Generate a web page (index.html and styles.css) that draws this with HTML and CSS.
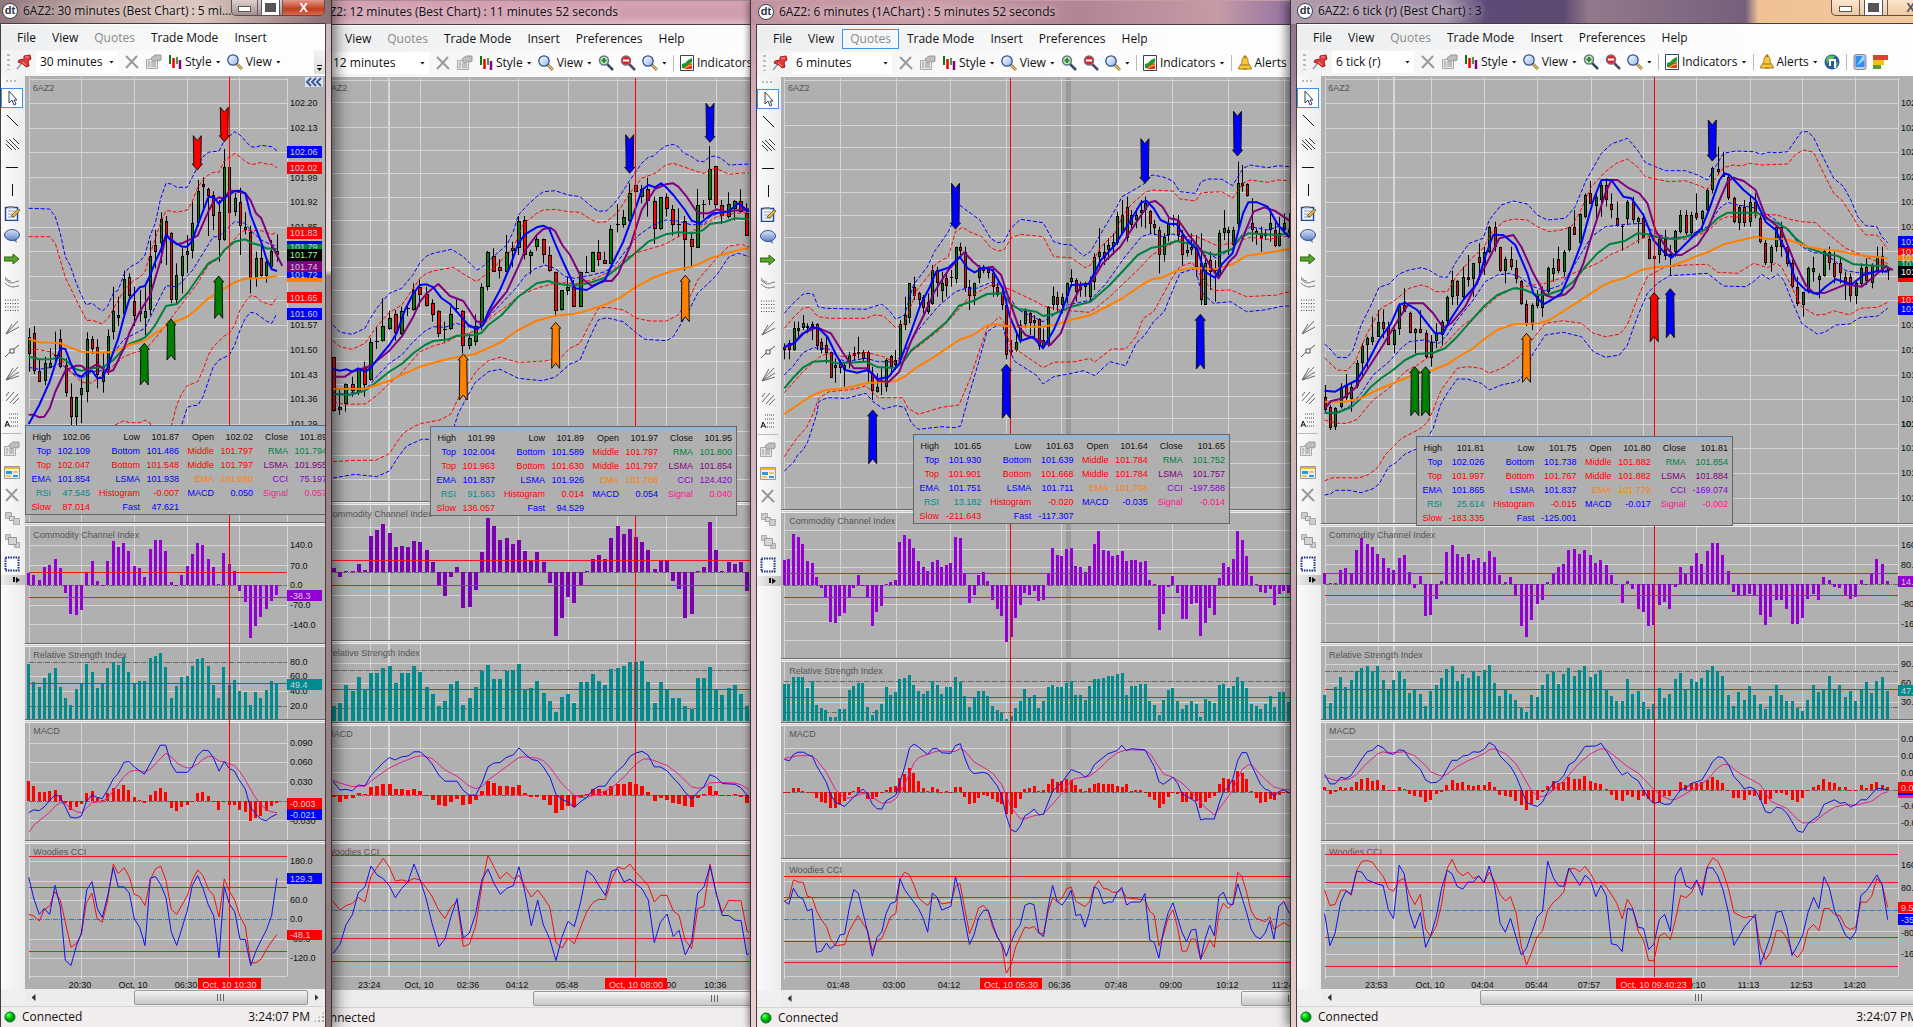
FILE: index.html
```html
<!DOCTYPE html>
<html lang="en">
<head>
<meta charset="utf-8">
<title>6AZ2 charts</title>
<link rel="stylesheet" href="styles.css">
</head>
<body>
<svg class="defs" aria-hidden="true">
  <defs>
    <linearGradient id="lens" x1="0" y1="0" x2="1" y2="1"><stop offset="0" stop-color="#fff"/><stop offset="1" stop-color="#8fb8ee"/></linearGradient>
    <linearGradient id="bub" x1="0" y1="0" x2="0" y2="1"><stop offset="0" stop-color="#dbe6f7"/><stop offset="1" stop-color="#5f83c6"/></linearGradient>
    <radialGradient id="lamp" cx=".35" cy=".3"><stop offset="0" stop-color="#9f9"/><stop offset=".5" stop-color="#0e0"/><stop offset="1" stop-color="#090"/></radialGradient>
  </defs>
  <symbol id="pin" viewBox="0 0 16 16"><path d="M1 15l5-6" stroke="#999" stroke-width="1.5"/><path d="M8 2l6-1 1 4-3 2 1 5-3 1-3-3-5-2 1-2 5-1z" fill="#dd3a3a" stroke="#a31c1c"/><path d="M9 3l4 0M6 8l4 3" stroke="#ff9a9a"/></symbol>
  <symbol id="cross" viewBox="0 0 16 16"><path d="M2 2l12 12M13 2L2 14" stroke="#9a9a9a" stroke-width="2" fill="none"/></symbol>
  <symbol id="props" viewBox="0 0 16 16"><path d="M.5 5.500h11v9H.5z" fill="#e4e4e4" stroke="#aaa"/><path d="M2 8h2M5 8h5M2 10h2M5 10h5M2 12h2M5 12h5" stroke="#999"/><path d="M5 4l4-3h6v5l-2 1-3-1-2 2-2-2z" fill="#bdbdbd" stroke="#999"/></symbol>
  <symbol id="style" viewBox="0 0 14 14"><path d="M2 0v9" stroke="#087a08" stroke-width="2"/><path d="M5.500 3v10" stroke="#e00" stroke-width="2.500"/><path d="M9 2v7" stroke="#087a08" stroke-width="1.500"/><path d="M12 5v9" stroke="#808" stroke-width="2.500"/></symbol>
  <symbol id="mag" viewBox="0 0 16 16"><path d="M9 9l6 6" stroke="#a8813c" stroke-width="3"/><path d="M9 9l6 6" stroke="#f2d28a"/><circle cx="6" cy="6" r="5.200" fill="url(#lens)" stroke="#33508f" stroke-width="1.300"/></symbol>
  <symbol id="zin" viewBox="0 0 16 16"><path d="M8 8l7 7" stroke="#344a66" stroke-width="2.500"/><circle cx="6" cy="5.500" r="4.500" fill="#bfe3bf" stroke="#678" stroke-width="1.500"/><path d="M6 3v5M3.500 5.500h5" stroke="#2a8a2a" stroke-width="2"/></symbol>
  <symbol id="zout" viewBox="0 0 16 16"><path d="M8 8l7 7" stroke="#4a4a66" stroke-width="2.500"/><circle cx="6" cy="5.500" r="4.500" fill="#d22" stroke="#867" stroke-width="1.500"/><path d="M3 5.500h6" stroke="#fff" stroke-width="2"/></symbol>
  <symbol id="ind" viewBox="0 0 14 16"><path d="M.5.5h13v15H.5z" fill="#fff" stroke="#345"/><path d="M2 13V9l3-1 3-3 4-2v4L5 13z" fill="#1a9a2a"/><path d="M3 14l4-4 5-2v6z" fill="#e33c1c"/><path d="M4 14l4-3 4-1" stroke="#fc3" fill="none"/></symbol>
  <symbol id="bell" viewBox="0 0 14 16"><path d="M7 2c-3 0-3 3-3 5 0 2-3.500 4-3.500 7h13c0-3-3.500-5-3.500-7 0-2 0-5-3-5z" fill="#f8c63c" stroke="#a87a12"/><circle cx="7" cy="1.800" r="1.500" fill="#a87a12"/><path d="M3 10h8M5 14h4" stroke="#b98a1c" stroke-width="1.500"/></symbol>
  <symbol id="globe" viewBox="0 0 16 16"><circle cx="8" cy="8" r="7.500" fill="#2f5a9a"/><path d="M2 5c2-4 6-4 9-3l-2 3-4 2-2 3zM11 9l3-1-1 4-3 2z" fill="#5cbf58"/><path d="M6 12V6h5v8" stroke="#fff" fill="none" stroke-width="2"/></symbol>
  <symbol id="phone" viewBox="0 0 13 16"><rect x=".5" y=".5" width="12" height="15" rx="2" fill="#ccd" stroke="#889"/><path d="M2 2h9v11H2z" fill="#2f8ef0"/><path d="M3 12l6-10 2 0v4z" fill="#9cd0ff"/></symbol>
  <symbol id="heat" viewBox="0 0 16 16"><path d="M0 1h15v5H0z" fill="#d9432c"/><path d="M0 6h11v5H0z" fill="#f2c21c"/><path d="M0 11h8v4H0z" fill="#5a9a33"/></symbol>
  <symbol id="ptr" viewBox="0 0 16 16"><path d="M5 1v12l3-3 2 5 2-1-2-4h3z" fill="#fff" stroke="#345"/></symbol>
  <symbol id="l1" viewBox="0 0 16 16"><path d="M3 2l11 11" stroke="#111"/></symbol>
  <symbol id="l3" viewBox="0 0 16 16"><path d="M2 4l10 10M5 3l10 10M9 2l6 6M2 8l6 6" stroke="#333"/></symbol>
  <symbol id="lh" viewBox="0 0 16 16"><path d="M2 8.500h12" stroke="#111"/></symbol>
  <symbol id="lv" viewBox="0 0 16 16"><path d="M8.500 2v12" stroke="#111"/></symbol>
  <symbol id="note" viewBox="0 0 16 16"><path d="M1.500 2.500h12v13h-12z" fill="#f4f8ff" stroke="#234b9c" stroke-width="1.500"/><path d="M4 1h6v2H4z" fill="#888"/><path d="M4 6h7M4 9h5M4 12h7" stroke="#99a"/><path d="M7 11l7-7 2 1-6 7z" fill="#f5b92e" stroke="#664"/></symbol>
  <symbol id="bubble" viewBox="0 0 16 16"><ellipse cx="8" cy="7" rx="7.500" ry="5.500" fill="url(#bub)" stroke="#334f96"/><path d="M9 12l4 3-1-4z" fill="#4a6cb5"/></symbol>
  <symbol id="arr" viewBox="0 0 16 16"><path d="M0 6h9V3l6 5-6 5v-3H0z" fill="#58a52c" stroke="#2b6310"/></symbol>
  <symbol id="curve" viewBox="0 0 16 16"><path d="M1 5c3 3 5 4 7 4s4-2 7-2M1 9c3 3 6 4 8 4s3-1 6-1M1 3c2 3 4 4 6 4" stroke="#777" fill="none"/></symbol>
  <symbol id="dots" viewBox="0 0 16 16"><path d="M1 3h14M1 6.500h14M1 10h14M1 13.500h14" stroke="#444" stroke-dasharray="1 1.500"/></symbol>
  <symbol id="fan" viewBox="0 0 16 16"><path d="M2 14L14 1M2 14L15 6M2 14l13-4M2 14L9 2" stroke="#666"/></symbol>
  <symbol id="fan2" viewBox="0 0 16 16"><path d="M2 14L14 1M2 14L15 7M2 14L8 4" stroke="#666"/></symbol>
  <symbol id="link" viewBox="0 0 16 16"><path d="M1 14l5-5M10 6l5-4M6 6h4v4H6z" stroke="#555" fill="none"/></symbol>
  <symbol id="hatch" viewBox="0 0 16 16"><path d="M2 12l8-9M6 14l8-9M9 15l6-6M2 7l3-4" stroke="#666"/></symbol>
  <symbol id="fib" viewBox="0 0 16 16"><path d="M1 15l2-6 3 6M2 13h3" stroke="#111" fill="none"/><path d="M5 2h10M5 6h10M7 10h8M7 14h8" stroke="#444" stroke-dasharray="1 1"/></symbol>
  <symbol id="cal" viewBox="0 0 16 16"><path d="M.5 2.500h15v12H.5z" fill="#e8f0fb" stroke="#999"/><path d="M1 3h14v2H1z" fill="#f0b828"/><path d="M2 7h6v3H2zM9 11h5v2H9z" fill="#2f9ad8"/><path d="M9 7h5v2H9zM2 11h5v2H2z" fill="#f3c64a"/></symbol>
  <symbol id="stack" viewBox="0 0 16 16"><path d="M1.500 2.500h6v6h-6z" fill="#ccc" stroke="#aaa"/><path d="M5.500 6.500h5v4h-5z" fill="#ddd" stroke="#999"/><path d="M9.500 8.500h6v6h-6z" fill="#ccc" stroke="#aaa"/></symbol>
  <symbol id="stack2" viewBox="0 0 16 16"><path d="M1.500 1.500h5v5h-5zM10.500 9.500h5v5h-5z" fill="#ccc" stroke="#aaa"/><path d="M4.500 4.500h8v7h-8z" fill="#d4d4d4" stroke="#999"/></symbol>
  <symbol id="sel" viewBox="0 0 16 16"><path d="M1.500 1.500h13v13h-13z" fill="#f8faff" stroke="#1c2f7a" stroke-width="2" stroke-dasharray="1.500 1"/></symbol>
</svg>

<!-- drawing palette, shared by every chart window -->
<template id="palette">
  <i class="tgrip"></i>
  <button class="on" aria-label="Pointer"><svg><use href="#ptr"/></svg></button>
  <button aria-label="Line"><svg><use href="#l1"/></svg></button>
  <button aria-label="Channel"><svg><use href="#l3"/></svg></button>
  <button aria-label="Horizontal line"><svg><use href="#lh"/></svg></button>
  <button aria-label="Vertical line"><svg><use href="#lv"/></svg></button>
  <button aria-label="Note"><svg><use href="#note"/></svg></button>
  <button aria-label="Balloon"><svg><use href="#bubble"/></svg></button>
  <button aria-label="Arrow"><svg><use href="#arr"/></svg></button>
  <button aria-label="Arc"><svg><use href="#curve"/></svg></button>
  <button aria-label="Levels"><svg><use href="#dots"/></svg></button>
  <button aria-label="Fan"><svg><use href="#fan2"/></svg></button>
  <button aria-label="Segment"><svg><use href="#link"/></svg></button>
  <button aria-label="Gann fan"><svg><use href="#fan"/></svg></button>
  <button aria-label="Pitchfork"><svg><use href="#hatch"/></svg></button>
  <button aria-label="Extension"><svg><use href="#fib"/></svg></button>
  <i class="tsep"></i>
  <button aria-label="Properties"><svg><use href="#props"/></svg></button>
  <button aria-label="Template"><svg><use href="#cal"/></svg></button>
  <button aria-label="Delete"><svg><use href="#cross"/></svg></button>
  <button aria-label="Forward"><svg><use href="#stack"/></svg></button>
  <button aria-label="Backward"><svg><use href="#stack2"/></svg></button>
  <button aria-label="Select"><svg><use href="#sel"/></svg></button>
  <i class="more"></i>
</template>

<main class="desktop">

  <!-- 12 minutes -->
  <section class="win win-b" data-chart="b">
    <header class="title"><span class="logo">dt</span><h2>6AZ2: 12 minutes (Best Chart) : 11 minutes 52 seconds</h2></header>
    <div class="client">
      <nav class="menu"><button>File</button><button>View</button><button disabled>Quotes</button><button>Trade Mode</button><button>Insert</button><button>Preferences</button><button>Help</button></nav>
      <div class="bar">
        <i class="grip"></i><svg class="i"><use href="#pin"/></svg>
        <button class="combo wide"><span>12 minutes</span><i class="dn"></i></button>
        <svg class="i"><use href="#cross"/></svg><svg class="i"><use href="#props"/></svg>
        <button class="tb"><svg class="n"><use href="#style"/></svg>Style<i class="dn"></i></button>
        <button class="tb"><svg class="i"><use href="#mag"/></svg>View<i class="dn"></i></button>
        <svg class="i"><use href="#zin"/></svg><svg class="i"><use href="#zout"/></svg>
        <button class="tb"><svg class="i"><use href="#mag"/></svg><i class="dn"></i></button><i class="sep"></i>
        <button class="tb"><svg class="n"><use href="#ind"/></svg>Indicators<i class="dn"></i></button>
      </div>
      <div class="work"><aside class="tools"></aside>
        <div class="chart"><svg class="plot"></svg>
          <table class="info info-b">
            <tr><th>High</th><td>101.99</td><th>Low</th><td>101.89</td><th>Open</th><td>101.97</td><th>Close</th><td>101.95</td></tr>
            <tr class="blue"><th>Top</th><td>102.004</td><th>Bottom</th><td>101.589</td><th class="red">Middle</th><td class="red">101.797</td><th class="green">RMA</th><td class="green">101.800</td></tr>
            <tr class="red"><th>Top</th><td>101.963</td><th>Bottom</th><td>101.630</td><th>Middle</th><td>101.797</td><th class="purple">LSMA</th><td class="purple">101.854</td></tr>
            <tr class="blue"><th>EMA</th><td>101.837</td><th>LSMA</th><td>101.926</td><th class="orange">EMA</th><td class="orange">101.708</td><th class="violet">CCI</th><td class="violet">124.420</td></tr>
            <tr class="red"><th class="teal">RSI</th><td class="teal">91.563</td><th>Histogram</th><td>0.014</td><th class="blue">MACD</th><td class="blue">0.054</td><th class="pink">Signal</th><td class="pink">0.040</td></tr>
            <tr class="red"><th>Slow</th><td>136.057</td><th class="blue">Fast</th><td class="blue">94.529</td><td colspan="4"></td></tr>
          </table>
        </div>
      </div>
      <div class="scroll"><button class="lt" aria-label="Scroll left"></button><div class="track track-b"><i class="thumb"></i></div></div>
      <footer class="status"><svg class="lamp"><circle cx="6" cy="6" r="5" fill="url(#lamp)" stroke="#064"/></svg><span>Connected</span></footer>
    </div>
  </section>

  <!-- 6 minutes -->
  <section class="win win-c" data-chart="c">
    <header class="title"><span class="logo">dt</span><h2>6AZ2: 6 minutes (1AChart) : 5 minutes 52 seconds</h2></header>
    <div class="client">
      <nav class="menu"><button>File</button><button>View</button><button class="hot" disabled>Quotes</button><button>Trade Mode</button><button>Insert</button><button>Preferences</button><button>Help</button></nav>
      <div class="bar">
        <i class="grip"></i><svg class="i"><use href="#pin"/></svg>
        <button class="combo wide"><span>6 minutes</span><i class="dn"></i></button>
        <svg class="i"><use href="#cross"/></svg><svg class="i"><use href="#props"/></svg>
        <button class="tb"><svg class="n"><use href="#style"/></svg>Style<i class="dn"></i></button>
        <button class="tb"><svg class="i"><use href="#mag"/></svg>View<i class="dn"></i></button>
        <svg class="i"><use href="#zin"/></svg><svg class="i"><use href="#zout"/></svg>
        <button class="tb"><svg class="i"><use href="#mag"/></svg><i class="dn"></i></button><i class="sep"></i>
        <button class="tb"><svg class="n"><use href="#ind"/></svg>Indicators<i class="dn"></i></button><i class="sep"></i>
        <button class="tb"><svg class="n"><use href="#bell"/></svg>Alerts<i class="dn"></i></button>
      </div>
      <div class="work">
        <aside class="tools"></aside>
        <div class="chart"><svg class="plot"></svg>
          <table class="info info-c">
            <tr><th>High</th><td>101.65</td><th>Low</th><td>101.63</td><th>Open</th><td>101.64</td><th>Close</th><td>101.65</td></tr>
            <tr class="blue"><th>Top</th><td>101.930</td><th>Bottom</th><td>101.639</td><th class="red">Middle</th><td class="red">101.784</td><th class="green">RMA</th><td class="green">101.752</td></tr>
            <tr class="red"><th>Top</th><td>101.901</td><th>Bottom</th><td>101.668</td><th>Middle</th><td>101.784</td><th class="purple">LSMA</th><td class="purple">101.757</td></tr>
            <tr class="blue"><th>EMA</th><td>101.751</td><th>LSMA</th><td>101.711</td><th class="orange">EMA</th><td class="orange">101.704</td><th class="violet">CCI</th><td class="violet">-197.588</td></tr>
            <tr class="red"><th class="teal">RSI</th><td class="teal">13.182</td><th>Histogram</th><td>-0.020</td><th class="blue">MACD</th><td class="blue">-0.035</td><th class="pink">Signal</th><td class="pink">-0.014</td></tr>
            <tr class="red"><th>Slow</th><td>-211.643</td><th class="blue">Fast</th><td class="blue">-117.307</td><td colspan="4"></td></tr>
          </table>
        </div>
      </div>
      <div class="scroll"><button class="lt" aria-label="Scroll left"></button><div class="track track-c"><i class="thumb"></i></div></div>
      <footer class="status"><svg class="lamp"><circle cx="6" cy="6" r="5" fill="url(#lamp)" stroke="#064"/></svg><span>Connected</span></footer>
    </div>
  </section>

  <!-- 6 tick -->
  <section class="win win-d" data-chart="d">
    <header class="title"><span class="logo">dt</span><h2>6AZ2: 6 tick (r) (Best Chart) : 3</h2><div class="sys"><button class="min" aria-label="Minimize"></button><button class="max" aria-label="Maximize"></button><button class="cls" aria-label="Close">X</button></div></header>
    <div class="client">
      <nav class="menu"><button>File</button><button>View</button><button disabled>Quotes</button><button>Trade Mode</button><button>Insert</button><button>Preferences</button><button>Help</button></nav>
      <div class="bar">
        <i class="grip"></i><svg class="i"><use href="#pin"/></svg>
        <button class="combo"><span>6 tick (r)</span><i class="dn"></i></button>
        <svg class="i"><use href="#cross"/></svg><svg class="i"><use href="#props"/></svg>
        <button class="tb"><svg class="n"><use href="#style"/></svg>Style<i class="dn"></i></button>
        <button class="tb"><svg class="i"><use href="#mag"/></svg>View<i class="dn"></i></button>
        <svg class="i"><use href="#zin"/></svg><svg class="i"><use href="#zout"/></svg>
        <button class="tb"><svg class="i"><use href="#mag"/></svg><i class="dn"></i></button><i class="sep"></i>
        <button class="tb"><svg class="n"><use href="#ind"/></svg>Indicators<i class="dn"></i></button><i class="sep"></i>
        <button class="tb"><svg class="n"><use href="#bell"/></svg>Alerts<i class="dn"></i></button>
        <svg class="i"><use href="#globe"/></svg><i class="sep"></i><svg class="n"><use href="#phone"/></svg><svg class="i"><use href="#heat"/></svg>
      </div>
      <div class="work">
        <aside class="tools"></aside>
        <div class="chart"><svg class="plot"></svg>
          <table class="info info-d">
            <tr><th>High</th><td>101.81</td><th>Low</th><td>101.75</td><th>Open</th><td>101.80</td><th>Close</th><td>101.81</td></tr>
            <tr class="blue"><th>Top</th><td>102.026</td><th>Bottom</th><td>101.738</td><th class="red">Middle</th><td class="red">101.882</td><th class="green">RMA</th><td class="green">101.854</td></tr>
            <tr class="red"><th>Top</th><td>101.997</td><th>Bottom</th><td>101.767</td><th>Middle</th><td>101.882</td><th class="purple">LSMA</th><td class="purple">101.884</td></tr>
            <tr class="blue"><th>EMA</th><td>101.865</td><th>LSMA</th><td>101.837</td><th class="orange">EMA</th><td class="orange">101.779</td><th class="violet">CCI</th><td class="violet">-169.074</td></tr>
            <tr class="red"><th class="teal">RSI</th><td class="teal">25.614</td><th>Histogram</th><td>-0.015</td><th class="blue">MACD</th><td class="blue">-0.017</td><th class="pink">Signal</th><td class="pink">-0.002</td></tr>
            <tr class="red"><th>Slow</th><td>-183.335</td><th class="blue">Fast</th><td class="blue">-125.001</td><td colspan="4"></td></tr>
          </table>
        </div>
      </div>
      <div class="scroll"><button class="lt" aria-label="Scroll left"></button><div class="track track-d"><i class="thumb"></i></div><button class="rt" aria-label="Scroll right"></button></div>
      <footer class="status"><svg class="lamp"><circle cx="6" cy="6" r="5" fill="url(#lamp)" stroke="#064"/></svg><span>Connected</span><time>3:24:07 PM</time></footer>
    </div>
  </section>

  <!-- 30 minutes -->
  <section class="win win-a" data-chart="a">
    <header class="title"><span class="logo">dt</span><h2>6AZ2: 30 minutes (Best Chart) : 5 mi...</h2><div class="sys"><button class="min" aria-label="Minimize"></button><button class="max" aria-label="Maximize"></button><button class="cls" aria-label="Close">X</button></div></header>
    <div class="client">
      <nav class="menu"><button>File</button><button>View</button><button disabled>Quotes</button><button>Trade Mode</button><button>Insert</button></nav>
      <div class="bar">
        <i class="grip"></i><svg class="i"><use href="#pin"/></svg>
        <button class="combo"><span>30 minutes</span><i class="dn"></i></button>
        <svg class="i"><use href="#cross"/></svg><svg class="i"><use href="#props"/></svg>
        <button class="tb"><svg class="n"><use href="#style"/></svg>Style<i class="dn"></i></button>
        <button class="tb"><svg class="i"><use href="#mag"/></svg>View<i class="dn"></i></button>
        <i class="over"></i>
      </div>
      <div class="work">
        <aside class="tools"></aside>
        <div class="chart"><svg class="plot"></svg>
          <button class="fold" aria-label="Collapse axis"><svg viewBox="0 0 18 10"><path d="M6 1L2 5l4 4M11 1L7 5l4 4M16 1l-4 4 4 4" fill="none" stroke="#3a5a9a" stroke-width="2"/></svg></button>
          <table class="info info-a">
            <tr><th>High</th><td>102.06</td><th>Low</th><td>101.87</td><th>Open</th><td>102.02</td><th>Close</th><td>101.89</td></tr>
            <tr class="blue"><th>Top</th><td>102.109</td><th>Bottom</th><td>101.486</td><th class="red">Middle</th><td class="red">101.797</td><th class="green">RMA</th><td class="green">101.794</td></tr>
            <tr class="red"><th>Top</th><td>102.047</td><th>Bottom</th><td>101.548</td><th>Middle</th><td>101.797</td><th class="purple">LSMA</th><td class="purple">101.955</td></tr>
            <tr class="blue"><th>EMA</th><td>101.854</td><th>LSMA</th><td>101.938</td><th class="orange">EMA</th><td class="orange">101.680</td><th class="violet">CCI</th><td class="violet">75.197</td></tr>
            <tr class="red"><th class="teal">RSI</th><td class="teal">47.545</td><th>Histogram</th><td>-0.007</td><th class="blue">MACD</th><td class="blue">0.050</td><th class="pink">Signal</th><td class="pink">0.057</td></tr>
            <tr class="red"><th>Slow</th><td>87.014</td><th class="blue">Fast</th><td class="blue">47.621</td><td colspan="4"></td></tr>
          </table>
        </div>
      </div>
      <div class="scroll"><button class="lt" aria-label="Scroll left"></button><div class="track track-a"><i class="thumb"></i></div><button class="rt" aria-label="Scroll right"></button></div>
      <footer class="status"><svg class="lamp"><circle cx="6" cy="6" r="5" fill="url(#lamp)" stroke="#064"/></svg><span>Connected</span><time>3:24:07 PM</time><i class="size"></i></footer>
    </div>
  </section>
</main>
<script src="charts.js"></script>
</body>
</html>
```

FILE: styles.css
```css
* { box-sizing: border-box; }
body { margin: 0; font: 12px/16px "Open Sans", "Noto Sans", sans-serif; color: #111; }
button { font: inherit; color: inherit; border: 0; background: none; padding: 0; margin: 0; }
.defs { position: absolute; width: 0; height: 0; }

.desktop { position: relative; height: 100vh; min-height: 600px; overflow: hidden; background: #a88c98; }
.win {
  position: absolute; top: 0; bottom: 0; display: flex; flex-direction: column; padding: 0 6px;
  border-left: 1px solid #3c3038; border-right: 1px solid #3c3038;
}
.win-a { left: -6px; width: 338px; background: linear-gradient(#cbb9b8 0, #e6d9d6 270px, #937f7f 276px, #9c8888 60%, #8b7878); box-shadow: 0 0 16px 2px #000a; }
.win-b { left: 287px; width: 636px; top: 1px; bottom: -1px; background: #d39fb0; }
.win-c { left: 750px; width: 600px; bottom: -1px; padding-top: 1px; background: linear-gradient(#c79aa6 0, #e0bfc4 200px, #c8a9b6 260px, #dcbfc8 60%, #e8d0d0); box-shadow: -2px 0 6px #0006; }
.win-d { left: 1290px; right: -28px; background: linear-gradient(#8b6f86 0, #a78a9a 120px, #ead5cf 200px, #c3a4ab 60%, #e6cfca); box-shadow: -3px 0 10px #0008; }

.title { flex: none; height: 24px; margin: 0 -6px; padding: 0 6px 2px; display: flex; align-items: center; }
.title h2 { margin: 0 0 0 5px; font-size: 12px; font-weight: 400; line-height: 16px; white-space: nowrap; color: #111; text-shadow: 0 0 6px #fff8, 0 0 8px #fff8; }
.win-a .title { background: linear-gradient(90deg, #8d7479, #c9b0ab 35%, #dcc7bf 60%, #8a6f72); }
.win-b .title { background: linear-gradient(#d59fb0, #cf9db0 60%, #dfb9c2); }
.win-c .title { background: linear-gradient(90deg, #c0939e, #cf9fab 30%, #b28594 55%, #c59ba6 78%, #8d6ca0 92%); }
.win-d .title { background: linear-gradient(90deg, #b09aac 0, #a592aa 24%, #5d4a78 30%, #5c4a72 42%, #927a8c 46%, #75607c 70%, #efc193 72%, #f1cba2); }
.logo { flex: none; width: 16px; height: 16px; border: 1px solid #345; border-radius: 8px; background: #fff; text-align: center; font: 700 11px/13px "Liberation Sans", sans-serif; color: #334; }
.win-a .logo, .win-c .logo { margin-left: 1px; }
.sys { margin-left: auto; align-self: flex-start; height: 16px; display: flex; border: 1px solid #5b4a50; border-top: 0; border-radius: 0 0 5px 5px; overflow: hidden; background: linear-gradient(#ddd0cc, #a58f90); }
.sys button { width: 28px; height: 15px; display: grid; place-items: center; border-right: 1px solid #6b5a60; }
.sys .cls { width: 45px; border: 0; background: linear-gradient(#e3998a, #c23c20 60%, #d8694a); color: #fff; font: 700 13px/14px "Liberation Sans", sans-serif; }
.win-d .sys, .win-d .sys .cls { background: linear-gradient(#fbe6cf, #efc9a0); color: #555; }
.min::before { content: ""; width: 11px; height: 4px; margin-top: 3px; background: #fff; border: 1px solid #555; }
.max::before { content: ""; width: 11px; height: 9px; border: 3px solid #fff; outline: 1px solid #555; background: #555; }

.client { flex: 1; min-height: 0; display: flex; flex-direction: column; background: #f0f0f0; border-top: 1px solid #fff; outline: 1px solid #4a3c42; }
.menu { flex: none; height: 25px; display: flex; align-items: center; padding-left: 8px; background: linear-gradient(90deg, #eceef0, #fdfdfd 70%); overflow: hidden; }
.menu button { height: 20px; padding: 0 7px; white-space: nowrap; border: 1px solid transparent; }
.menu button:disabled { color: #8a8a8a; }
.menu .hot { border-color: #3a97e8; background: #f4f6f8; }
.bar { flex: none; height: 26px; display: flex; align-items: center; gap: 6px; padding: 0 0 2px 6px; background: linear-gradient(90deg, #f3f3f3, #fdfdfd 60%); overflow: hidden; white-space: nowrap; }
.i { flex: none; width: 16px; height: 16px; }
.n { flex: none; width: 14px; height: 16px; }
.grip { width: 3px; height: 16px; background: repeating-linear-gradient(#bbb 0 2px, transparent 2px 5px); }
.combo { flex: none; width: 82px; height: 22px; margin-left: -2px; padding: 0 4px; background: #fff; display: flex; align-items: center; justify-content: space-between; }
.combo.wide { width: 100px; }
.tb { flex: none; display: flex; align-items: center; gap: 3px; }
.dn { width: 5px; height: 3px; margin-left: 1px; background: #111; clip-path: polygon(0 0, 100% 0, 50% 100%); }
.sep { flex: none; width: 1px; height: 16px; background: #bbb; }
.over { margin-left: auto; align-self: stretch; width: 11px; background: linear-gradient(#f3f3f3, #ddd); display: flex; flex-direction: column; gap: 2px; align-items: center; justify-content: flex-end; padding-bottom: 3px; }
.over::before { content: ""; width: 5px; height: 1px; background: #111; }
.over::after { content: ""; width: 5px; height: 3px; background: #111; clip-path: polygon(0 0, 100% 0, 50% 100%); }

.work { flex: 1; min-height: 0; display: flex; }
.tools { flex: none; width: 24px; padding-top: 3px; display: flex; flex-direction: column; align-items: flex-start; background: linear-gradient(90deg, #fbfbfb, #ececec); overflow: hidden; }
.tools button { flex: none; width: 22px; height: 23px; display: grid; place-items: center; }
.tools .on { height: 20px; margin: 1px 0; border: 1px solid #3a97e8; background: #fff; }
.tools svg { width: 16px; height: 16px; }
.tgrip { flex: none; width: 10px; height: 2px; margin: 1px 5px 5px; background: repeating-linear-gradient(90deg, #bbb 0 2px, transparent 2px 4px); }
.tsep { flex: none; width: 20px; height: 1px; margin: 2px 1px 3px; background: #bbb; }
.more { flex: none; width: 24px; height: 10px; padding: 2px 5px 0 0; display: flex; gap: 1px; justify-content: flex-end; background: linear-gradient(90deg, #eee, #bbb); }
.more::before { content: ""; width: 2px; height: 5px; background: #111; }
.more::after { content: ""; width: 4px; height: 6px; background: #111; clip-path: polygon(0 0, 100% 50%, 0 100%); }

.chart { flex: 1; min-width: 0; position: relative; overflow: hidden; background: #b0b0b0; }
.plot { display: block; width: 100%; height: 100%; font: 9px "Liberation Sans", sans-serif; }
.fold { position: absolute; right: 2px; top: 1px; width: 18px; height: 10px; background: #dde2ea; }
.fold svg { display: block; }
.info { position: absolute; width: 306px; height: 89px; table-layout: fixed; border-collapse: separate; border-spacing: 0; padding: 4px 4px 0 0; border: 1px solid #666; background: linear-gradient(#97b4d3 4px, #b0b0b0 4px); font: 9px/14px "Liberation Sans", sans-serif; color: #111; }
.info th, .info td { padding: 0; font-weight: 400; text-align: right; white-space: nowrap; height: 14px; }
.info th:nth-child(1) { width: 25px; }
.info td:nth-child(2) { width: 39px; }
.info th:nth-child(3) { width: 50px; }
.info td:nth-child(4), .info td:nth-child(6), .info td:nth-child(8) { width: 39px; }
.info th:nth-child(5), .info th:nth-child(7) { width: 35px; }
.info-a { left: 0; top: 349px; }
.info-b { left: 112px; top: 349px; }
.info-c, .info-d { width: 317px; }
.info-c td:nth-child(2), .info-c td:nth-child(4), .info-c td:nth-child(8), .info-d td:nth-child(2), .info-d td:nth-child(4), .info-d td:nth-child(8) { width: 42px; }
.info-c { left: 132px; top: 357px; }
.info-d { left: 95px; top: 360px; }
.info .blue, .info tr.blue { color: #00f; }
.info .red, .info tr.red { color: #f00; }
.info .green { color: #00803c; }
.info .purple { color: #800080; }
.info .orange { color: #ff8000; }
.info .violet { color: #8800cc; }
.info .teal { color: #008c8c; }
.info .pink { color: #ff1493; }

.scroll { flex: none; height: 17px; margin-left: 24px; display: flex; background: #ececec; }
.scroll button { flex: none; width: 17px; display: grid; place-items: center; }
.lt::before { content: ""; width: 4px; height: 7px; background: #333; clip-path: polygon(100% 0, 100% 100%, 0 50%); }
.rt::before { content: ""; width: 4px; height: 7px; background: #333; clip-path: polygon(0 0, 0 100%, 100% 50%); }
.track { flex: 1; display: flex; padding: 1px 0; }
.thumb { flex: 1; border: 1px solid #999; border-radius: 2px; background: repeating-linear-gradient(90deg, #666 0 1px, transparent 1px 3px) center/8px 7px no-repeat, linear-gradient(#f4f4f4, #dcdcdc 50%, #c8c8c8); }
.track-a { padding-left: 92px; }
.track-b { padding: 1px 20px 1px 198px; }
.track-c { padding-left: 443px; }
.track-d { padding-left: 142px; }
.status { flex: none; height: 21px; display: flex; align-items: center; padding: 0 0 0 3px; background: #f1edec; border-top: 1px solid #d8d4d4; }
.lamp { width: 12px; height: 12px; margin-right: 6px; }
.status time { margin-left: auto; padding-right: 16px; }
.status .size { width: 12px; height: 12px; margin-left: -13px; background: radial-gradient(#aaa 1px, transparent 1px) 0 0/4px 4px; clip-path: polygon(100% 0, 100% 100%, 0 100%); }
```

FILE: charts.js
```js
// Each chart keeps its samples in plot units; ox/sx map them to pixels across,
// and the price pane (top) and the study panes (low) have a scale of their own down.
const NS = 'http://www.w3.org/2000/svg';
const C = { b: '#0000ff', r: '#ff0000', g: '#008040', o: '#ff8000', p: '#800080', k: '#000', t: '#008c8c', v: '#9400d3', m: '#ff1493' };

const charts = {
a: {
  left: 25, topY: 76, ox: 0, sx: 3, x0: 86, step: 15.83, x1: 861, bw: 3, cross: 688, cci: '#9400d3',
  vx: [86, 244, 403, 562, 718], thick: [],
  hy: [238, 310, 383, 457, 532, 605, 680, 754, 827, 901, 976, 1049, 1124, 1198, 1272], hl: [],
  div: [265, 578, 775, 1087], base: [425, 772, 983],
  hc: [324, 375, 477, 528, 662, 700, 833, 882, 934, 1034, 1140, 1190, 1240, 1340, 1389], dash: [425, 625, 738, 983], zero: 1290,
  red: [393, 458, 680, 1125, 1207, 1372], titles: [297, 608, 804, 1115], tx: 100, hx: 98,
  up1: '86,625 149,627 166,650 181,700 196,770 211,797 229,850 244,885 259,915 276,908 292,923 307,933 322,920 340,880 355,870 372,822 388,802 419,785 435,765 451,705 466,670 482,595 498,550 514,552 530,562 562,562 577,532 609,470 625,457 657,453 673,422 704,395 720,405 752,440 768,442 784,436 815,440 831,453',
  up2: '86,710 149,710 166,730 196,832 229,900 260,962 276,960 307,972 324,955 340,927 372,870 403,840 419,832 435,815 451,760 482,668 498,632 514,633 530,637 562,630 577,605 593,562 609,540 625,525 640,517 657,517 673,483 704,460 720,470 736,485 752,493 768,492 784,487 799,492 815,493 831,503',
  mid1: '86,1102 118,1108 149,1103 181,1090 213,1117 244,1135 276,1115 307,1112 340,1060 372,1018 403,1002 435,985 466,920 498,857 530,860 546,845 577,812 609,760 640,710 657,710 673,693 704,665 736,670 752,692 784,720 815,735 831,738',
  mid2: '86,1049 118,1049 149,1055 181,1075 213,1117 244,1145 260,1150 276,1148 307,1125 340,1097 372,1070 403,1058 435,1050 466,1015 498,975 530,932 562,890 593,850 625,795 657,775 688,735 720,700 736,690 752,692 784,692 815,703 831,697',
  lo2: '345,1275 372,1262 388,1268 419,1268 435,1260 451,1270 455,1300 505,1300 514,1278 530,1215 546,1180 562,1157 593,1145 609,1110 625,1065 640,1040 673,1008 688,1000 704,975 720,930 736,905 752,887 768,890 784,905 815,915 831,890',
  lo1: '540,1290 562,1222 577,1217 593,1216 609,1190 640,1100 657,1080 688,1065 704,1035 720,990 736,955 752,937 768,940 799,963 815,970 831,940',
  green: '86,1070 118,1078 149,1078 181,1073 196,1080 213,1095 229,1108 244,1112 276,1105 307,1102 324,1092 340,1080 372,1045 388,1032 419,1020 435,1012 451,995 466,975 498,918 530,912 562,880 593,835 625,790 657,773 673,750 704,725 736,718 752,728 784,737 799,745 831,748',
  orange: '86,1016 118,1027 181,1030 213,1043 244,1055 307,1058 340,1055 372,1042 388,1035 435,1022 466,1000 498,978 530,963 562,950 593,925 625,895 657,878 673,865 704,847 736,836 799,833 831,827',
  purple: '86,1244 101,1244 118,1252 133,1250 149,1225 166,1175 196,1112 229,1097 244,1097 260,1110 292,1092 307,1105 324,1117 340,1110 355,1080 372,1045 388,1000 419,935 451,885 482,780 498,705 514,717 530,733 546,730 577,715 593,707 625,635 641,603 657,592 673,597 688,572 704,573 736,580 752,602 768,640 784,655 815,735 847,798',
  blue: '86,1272 118,1215 149,1145 181,1045 196,1047 213,1092 229,1123 244,1130 260,1115 276,1112 292,1135 307,1133 324,1100 355,1015 372,950 388,898 419,862 435,858 451,825 466,785 482,750 498,705 514,722 546,740 562,740 577,722 593,675 625,592 640,590 657,612 673,592 688,585 704,573 720,572 736,580 752,645 784,727 799,775 815,808 831,813',
  candles: '985,1115,1010,1060,g 978,1122,998,1112,r 1080,1145,1113,1145,r 1070,1155,1090,1145,g 1045,1105,1088,1102,g 995,1090,1064,1067,g 988,1105,1018,1102,r 1075,1190,1095,1178,r 1150,1290,1190,1250,r 1190,1290,1190,1250,g 1135,1270,1165,1185,g 997,1207,1018,1178,g 1008,1062,1018,1048,r 1018,1165,1040,1125,r 1060,1178,1115,1145,g 988,1125,1008,1110,g 860,1018,933,995,g 890,978,945,955,g 812,945,838,943,g 820,900,830,888,r 860,978,902,948,r 870,965,933,943,r 860,1005,933,953,g 722,945,767,930,g 690,805,735,755,r 637,790,658,730,g 648,795,662,705,r 697,910,700,902,r 790,915,826,902,g 745,880,767,826,g 705,820,753,764,g 605,775,670,755,g 540,680,574,670,g 532,630,553,563,r 563,708,566,587,r 574,690,584,646,r 600,785,636,721,r 447,722,502,720,g 498,640,500,637,r 578,648,595,637,g 563,765,607,680,r 637,703,680,690,r 677,880,695,836,r 755,860,775,838,g 723,830,773,826,r 775,848,785,828,g 720,808,753,802,g 703,785,753,764,r',
  c: '395,400,413,380,375,359,382,447,500,503,490,393,364,416,429,364,313,328,318,338,377,382,406,333,310,310,338,418,429,400,377,346,318,323,359,380,424,344,372,390,441,470,562,531,508,487,467,451',
  s: '630,677,690,666,654,641,690,718,736,695,682,630,651,692,682,641,625,633,612,651,682,674,674,615,610,602,638,718,687,664,661,635,617,615,635,685,718,638,685,672,700,703,736,703,718,697,674,682',
  h: '933,945,961,961,958,956,968,990,1007,1000,992,964,958,975,981,964,950,952,943,956,974,982,989,969,958,951,961,1001,1009,1000,995,983,964,961,972,987,1006,983,994,994,1007,1013,1035,1028,1024,1010,997,989',
  macd: '86,1014 101,1007 118,1009 133,999 149,983 166,967 181,974 196,999 211,1026 229,1028 244,1023 259,986 276,968 292,975 307,978 322,957 340,927 355,912 372,884 388,882 403,896 433,915 451,887 481,840 497,840 514,890 529,910 562,910 577,896 592,868 609,853 625,854 640,872 657,907 673,882 688,900 703,907 718,930 736,953 751,1000 766,1016 784,1032 799,1035 814,1025 831,1018',
  sig: '86,1065 103,1045 149,1013 166,997 181,988 196,991 211,1002 229,1012 244,1014 259,1003 276,988 307,986 325,975 340,958 370,923 388,909 403,905 418,906 435,909 451,902 481,875 497,861 514,870 529,884 544,893 562,899 577,897 592,889 609,877 625,869 640,870 657,881 673,883 688,888 703,893 718,906 736,930 766,975 784,994 799,1006 814,1012 831,1014',
  wr: '86,1277 101,1281 118,1294 133,1265 149,1255 164,1218 181,1240 196,1297 213,1362 229,1352 244,1330 259,1248 276,1222 291,1287 307,1297 322,1245 340,1147 355,1172 372,1156 388,1180 403,1225 419,1231 435,1254 451,1188 466,1160 482,1152 498,1190 514,1264 530,1277 562,1228 577,1189 593,1162 609,1177 625,1212 641,1228 657,1284 673,1185 688,1217 704,1240 720,1283 736,1307 752,1402 768,1402 784,1392 799,1368 815,1347 831,1329',
  wb: '86,1181 101,1235 118,1277 133,1262 149,1277 165,1202 181,1258 196,1395 213,1409 229,1359 244,1325 260,1214 276,1192 292,1262 307,1285 324,1225 340,1156 355,1206 372,1206 388,1222 403,1289 419,1310 435,1358 451,1184 466,1179 482,1200 498,1234 514,1323 530,1357 546,1312 562,1267 577,1202 593,1177 609,1210 625,1252 641,1281 657,1389 673,1205 688,1250 704,1270 720,1341 736,1342 752,1409 768,1371 784,1343 799,1318 815,1279 831,1183',
  arrows: 'd,592,407,510,#ff0000 d,673,322,425,#ff0000 u,433,1030,1155,#008000 u,513,957,1080,#008000 u,656,828,955,#008000',
  times: [[240, '20:30'], [399, 'Oct, 10'], [558, '06:30']], ty: 1458, now: [594, 783, 'Oct, 10 10:30'],
  axT: [[310, '102.20'], [385, '102.13'], [533, '101.99'], [607, '101.92'], [680, '101.85'], [976, '101.57'], [1050, '101.50'], [1124, '101.43'], [1198, '101.36'], [1272, '101.29']],
  axL: [[324, '140.0'], [376, '70.0'], [425, '0.0'], [477, '-70.0'], [529, '-140.0'], [624, '80.0'], [662, '60.0'], [700, '40.0'], [738, '20.0'], [833, '0.090'], [882, '0.060'], [934, '0.030'], [983, '0.000'], [1035, '-0.030'], [1140, '180.0'], [1190, '120.0'], [1241, '60.0'], [1290, '0.0'], [1340, '-60.0'], [1389, '-120.0']],
  badT: [[724, 738, '', C.b], [733, 748, '101.79', C.g], [833, 845, '', C.o], [815, 833, '101.72', C.b], [783, 817, '101.74', C.p], [748, 782, '101.77', C.k, '#9f9'], [438, 475, '102.06', C.b], [485, 522, '102.02', C.r], [680, 716, '101.83', C.r], [875, 910, '101.65', C.r], [924, 959, '101.60', C.b]],
  badL: [[440, 468, '-38.3', C.v], [669, 697, '49.4', C.t], [976, 1005, '-0.003', C.r], [1005, 1034, '-0.021', C.b], [1171, 1199, '129.3', C.b], [1316, 1343, '-48.1', C.r]]
},
b: {
  left: 318, topY: 77, ox: 325, sx: 3, x0: 27, step: 18.49, x1: 1800, bw: 4, cross: 931, cci: '#7a00b0',
  vx: [-14, 136, 286, 433, 580, 730, 877, 1024, 1174, 1320], thick: [[191, 2, '#d8d8d8']],
  hy: [240, 307, 380, 449, 520, 590, 660, 731, 802, 871, 942, 1013, 1084, 1153, 1222], hl: [29, 89, 151],
  div: [212, 570, 782, 1088], base: [393, 778, 968],
  hc: [277, 335, 453, 510, 627, 678, 729, 848, 908, 1027, 1150, 1210, 1325, 1380], dash: [393, 645, 745, 968], zero: 1266,
  red: [361, 427, 695, 1124, 1194, 1338, 1398], titles: [242, 601, 812, 1117], tx: 4, hx: 2,
  up1: '24,975 45,997 82,1003 120,985 136,955 155,925 193,880 230,865 265,823 285,788 305,768 325,760 380,748 415,770 455,810 470,803 490,783 545,735 565,695 580,645 610,613 635,590 655,575 690,572 730,585 765,590 800,620 820,634 845,632 860,618 880,595 915,540 950,490 970,472 985,468 1005,450 1022,438 1045,433 1060,440 1075,458 1100,470 1118,483 1137,485 1155,470 1173,468 1192,478 1212,495 1272,492',
  up2: '24,1022 45,1040 82,1048 120,1030 155,980 193,937 230,915 265,865 285,835 305,820 325,813 385,802 420,825 455,845 490,818 530,780 565,745 595,672 635,640 655,630 690,628 730,635 765,637 800,660 820,667 845,665 880,635 915,578 950,535 990,520 1022,495 1045,490 1075,500 1118,515 1137,520 1155,508 1173,505 1212,523 1250,519 1272,520',
  mid1: '24,1180 60,1182 120,1170 155,1130 193,1090 230,1065 265,1025 300,993 325,980 360,982 395,970 420,980 450,982 490,952 530,910 575,862 600,828 630,806 660,795 690,805 720,830 750,835 800,825 840,815 870,795 900,755 935,710 970,685 1000,668 1022,660 1060,663 1100,675 1137,672 1155,650 1185,638 1230,632 1272,632',
  mid2: '24,1205 60,1213 120,1212 155,1187 193,1150 230,1118 285,1055 325,1038 360,1028 395,1010 430,1000 460,990 500,950 545,918 585,885 640,863 690,850 720,848 750,852 800,840 860,812 900,775 935,758 980,745 1022,732 1060,710 1100,695 1137,675 1175,650 1230,640 1272,638',
  lo2: '24,1385 90,1381 152,1381 193,1361 210,1335 235,1300 265,1280 290,1270 345,1260 378,1242 400,1195 430,1150 455,1112 490,1082 525,1072 580,1087 660,1083 705,1075 735,1045 765,1030 790,980 820,925 845,922 895,930 935,955 975,963 1025,963 1060,945 1100,880 1118,840 1175,775 1212,738 1250,733 1272,740',
  lo1: '24,1434 90,1423 155,1430 193,1413 220,1370 245,1338 290,1318 370,1318 388,1278 400,1240 415,1212 450,1148 490,1115 525,1108 580,1135 650,1142 690,1132 735,1092 765,1080 800,1000 820,960 845,953 895,965 935,1000 960,1018 1025,1022 1045,1010 1060,985 1090,935 1118,880 1150,850 1175,825 1212,770 1240,760 1272,770',
  green: '24,1183 75,1184 120,1172 155,1145 193,1115 230,1092 265,1060 300,1035 325,1023 370,1018 395,1007 450,1005 470,998 490,975 530,945 580,890 635,850 670,843 690,850 740,857 765,855 800,847 840,833 870,810 900,785 935,755 970,725 1022,703 1060,697 1100,700 1120,697 1137,688 1155,672 1200,665 1230,655 1272,658',
  orange: '24,1167 120,1166 155,1155 193,1142 230,1125 285,1100 325,1088 380,1075 450,1062 470,1053 525,1028 580,990 635,962 690,947 745,942 785,932 845,912 885,893 935,860 980,835 1022,820 1060,808 1100,800 1137,785 1155,775 1190,765 1212,758 1250,748 1272,745',
  purple: '24,1130 60,1130 82,1115 120,1103 136,1098 165,1075 193,1052 230,1010 265,950 285,905 305,880 340,852 375,888 415,903 455,965 480,965 500,930 545,875 580,800 600,752 635,705 655,687 675,683 690,693 712,735 735,765 755,805 770,835 800,858 840,842 860,843 880,820 915,740 950,630 990,567 1022,553 1045,550 1060,560 1085,590 1118,640 1150,640 1175,628 1200,635 1272,627',
  blue: '24,1107 45,1112 65,1108 82,1115 100,1105 120,1115 136,1105 165,1068 193,1035 215,1000 240,930 265,880 285,855 305,853 325,862 350,895 375,912 400,940 430,975 455,987 475,975 490,935 525,870 555,800 580,730 600,703 635,682 655,677 672,685 690,730 712,780 735,830 750,865 785,870 820,850 840,840 860,795 895,725 935,615 950,570 970,555 990,562 1008,550 1022,560 1045,585 1080,630 1100,662 1125,670 1150,650 1165,640 1210,635 1240,610 1272,635',
  candles: '1072,1235,1072,1235,r 1165,1245,1222,1232,g 1150,1235,1153,1213,g 1130,1190,1153,1175,r 1105,1185,1108,1177,g 1085,1190,1103,1153,r 1013,1142,1025,1140,g 980,1047,1023,1024,g 895,1025,977,1023,g 932,990,955,988,g 930,1022,943,1000,r 920,1005,932,1000,g 918,948,925,926,g 850,932,871,930,g 838,920,860,883,r 860,920,883,920,r 898,965,908,943,r 930,1012,932,1000,r 965,1025,988,989,g 920,990,943,988,g 898,935,925,926,g 930,1060,932,1037,r 1000,1048,1013,1036,g 943,1037,977,1024,g 850,990,860,977,g 753,872,755,860,g 745,815,767,815,r 778,835,802,815,r 705,815,755,815,g 725,802,743,753,g 648,765,662,743,g 648,778,661,767,r 750,823,755,766,g 705,752,718,742,g 716,790,718,766,r 740,815,766,815,r 815,950,815,932,r 870,932,871,932,g 830,885,860,871,g 840,920,860,920,r 815,920,815,920,g 768,818,815,816,g 755,815,755,814,g 720,798,755,779,r 755,790,779,790,r 675,790,686,790,g 612,697,673,674,g 630,683,650,673,g 550,665,578,662,g 545,578,556,578,r 555,610,566,590,g 533,650,566,602,r 590,732,602,686,r 590,690,590,686,g 580,650,590,626,r 615,707,626,673,r 625,710,673,674,g 648,812,662,718,r 700,800,718,742,r 567,742,614,742,g 600,655,612,613,g 438,615,508,602,g 497,625,497,613,r 600,672,614,648,r 577,655,612,650,g 600,662,602,626,g 568,638,602,636,r 610,707,638,707,r',
  c: '382,406,390,390,372,387,300,284,269,292,328,325,328,313,315,336,367,428,455,406,380,486,483,438,341,253,274,310,305,320,310,338,364,341,367,420,558,511,457,473,428,390,360,349,360,305,274,294,282,302,315,336,385,362,362,416,437,511,500,390,380,263,336,390,367,372,367,441',
  s: '739,731,685,700,664,697,654,654,641,635,679,654,654,635,651,690,708,739,726,682,674,736,718,690,648,633,669,669,648,646,630,697,693,674,705,726,754,716,708,731,677,677,656,674,685,643,641,635,625,625,623,677,731,677,697,718,718,739,747,666,666,638,697,710,692,685,708,739',
  h: '974,987,979,976,964,966,948,945,940,940,953,953,956,953,958,970,982,994,997,987,979,994,992,982,958,933,938,945,945,948,943,964,974,974,982,994,1015,1007,997,1000,975,967,953,953,958,945,940,940,935,940,945,961,984,976,982,989,992,997,1000,976,967,945,958,970,970,966,973,989',
  macd: '24,933 45,956 63,954 82,958 100,943 120,945 138,918 175,885 193,872 210,878 230,870 249,868 267,857 285,857 303,870 321,888 342,918 360,933 396,933 414,956 432,969 452,969 471,938 489,896 507,886 525,885 543,872 565,865 582,847 600,863 620,877 638,880 655,896 675,923 693,967 711,980 729,987 748,1001 765,987 785,975 804,955 822,946 840,946 858,924 878,906 897,892 915,869 933,860 951,856 969,865 988,896 1006,896 1026,906 1045,925 1062,940 1080,961 1100,980 1120,960 1137,947 1155,916 1175,924 1192,939 1230,941 1248,950 1272,975',
  sig: '24,930 45,938 82,947 120,945 156,921 193,899 230,884 267,871 290,867 321,874 360,904 396,920 432,945 452,952 471,947 489,930 525,908 565,882 582,872 600,870 638,874 655,880 675,897 711,940 748,970 765,975 785,975 822,965 860,950 897,922 933,888 955,876 975,876 1000,884 1026,892 1062,916 1100,948 1120,951 1137,949 1155,937 1192,936 1230,938 1250,943 1272,955',
  wr: '24,1243 45,1266 63,1254 82,1249 100,1233 120,1245 138,1178 175,1132 193,1155 211,1191 230,1188 249,1192 267,1184 285,1188 303,1208 321,1230 342,1268 360,1287 378,1258 396,1243 415,1360 433,1354 452,1307 471,1200 489,1124 507,1155 525,1185 545,1168 565,1185 582,1176 600,1205 619,1232 638,1214 655,1233 674,1258 693,1350 711,1364 729,1338 748,1353 785,1270 804,1246 822,1238 841,1239 860,1186 878,1154 897,1160 915,1147 933,1168 951,1184 970,1203 988,1245 1006,1228 1026,1228 1045,1268 1062,1279 1080,1343 1100,1365 1118,1262 1137,1256 1155,1147 1175,1228 1192,1272 1211,1241 1248,1242 1266,1320 1272,1325',
  wb: '24,1378 45,1354 63,1304 82,1278 100,1221 120,1206 138,1152 156,1175 175,1185 193,1203 211,1234 230,1210 249,1193 267,1147 285,1187 303,1235 321,1300 342,1360 360,1340 378,1283 396,1236 415,1338 433,1325 452,1275 471,1187 489,1160 507,1197 526,1225 545,1210 565,1203 582,1154 600,1220 619,1307 638,1240 655,1304 674,1340 693,1396 711,1335 729,1295 748,1308 767,1245 785,1164 804,1177 822,1203 841,1228 860,1165 878,1160 897,1193 915,1186 951,1211 970,1240 988,1350 1006,1298 1026,1276 1045,1334 1062,1318 1081,1382 1100,1348 1118,1222 1137,1206 1155,1152 1175,1228 1192,1280 1211,1280 1230,1292 1248,1293 1266,1382 1272,1378',
  arrows: 'd,914,404,520,#0000ff d,1155,310,427,#0000ff u,415,1062,1200,#ff8000 u,692,967,1105,#ff8000 u,1081,826,965,#ff8000',
  times: [[133, '23:24'], [282, 'Oct, 10'], [429, '02:36'], [576, '04:12'], [726, '05:48'], [1020, '09:00'], [1171, '10:36']], ty: 1458, now: [840, 1026, 'Oct, 10 08:00'],
  axT: [], axL: [], badT: [], badL: []
},
c: {
  left: 781, topY: 77, ox: 745, sx: 2.851, x0: 112, step: 13.19, x1: 1700, bw: 3, cross: 756, cci: '#9400d3',
  vx: [112, 270, 429, 585, 745, 902, 1062, 1218, 1378, 1536], thick: [[922, 5, '#9a9a9a']],
  hy: [241, 307, 374, 442, 508, 577, 646, 712, 781, 848, 916, 985, 1052, 1120, 1189, 1255], hl: [55, 112, 172],
  div: [233, 616, 782, 1133], base: [427, 778, 960],
  hc: [285, 332, 379, 474, 520, 567, 690, 728, 846, 903, 1016, 1073, 1190, 1240, 1340, 1391], dash: [427, 675, 755, 960], zero: 1290,
  red: [396, 457, 715, 1178, 1233, 1345, 1401], titles: [262, 647, 812, 1161], tx: 126, hx: 123,
  up1: '112,940 135,912 165,883 180,880 195,883 208,920 230,925 345,928 365,920 390,913 410,930 430,958 455,945 480,855 520,800 540,755 580,695 612,615 630,630 670,660 700,715 720,728 738,725 758,685 785,658 850,668 880,725 905,733 930,735 965,768 985,755 1015,700 1055,630 1075,590 1100,575 1140,550 1160,525 1190,530 1220,543 1240,575 1285,580 1300,545 1320,537 1360,538 1390,557 1420,505 1440,495 1490,503 1520,497 1552,500',
  up2: '112,985 140,950 165,925 185,922 208,950 240,955 345,955 370,945 395,948 430,983 455,970 490,870 525,825 545,790 580,770 600,695 620,682 640,695 675,710 700,742 720,753 738,750 758,715 785,703 850,710 880,770 930,773 970,803 985,795 1015,740 1055,700 1075,650 1100,615 1140,577 1160,570 1220,573 1240,597 1285,603 1300,578 1360,575 1390,595 1420,550 1440,540 1490,547 1520,540 1552,542',
  mid1: '112,1125 140,1095 165,1058 195,1043 240,1048 260,1070 285,1085 345,1075 380,1085 430,1085 455,1055 490,995 550,920 600,875 630,865 660,865 700,848 720,848 745,880 780,930 850,965 880,945 920,915 985,900 1030,850 1080,775 1130,710 1160,700 1190,710 1220,702 1265,718 1300,750 1345,775 1395,740 1420,700 1440,680 1490,690 1520,680 1552,688',
  mid2: '112,1178 165,1115 210,1073 235,1060 280,1070 345,1057 395,1070 430,1088 455,1070 500,1035 560,985 600,940 640,890 690,862 710,853 740,862 770,875 830,905 850,917 900,930 980,937 1000,925 1040,890 1080,850 1120,810 1160,765 1220,730 1270,705 1300,715 1345,737 1395,728 1440,712 1490,718 1552,708',
  lo2: '112,1370 130,1341 150,1312 175,1283 195,1240 210,1195 240,1175 290,1170 320,1165 345,1157 365,1178 380,1193 450,1193 465,1225 495,1243 560,1222 610,1215 640,1140 690,985 725,950 740,970 755,1035 800,1068 850,1103 880,1087 940,1085 985,1075 995,1087 1045,1047 1085,1047 1115,1010 1135,955 1165,935 1220,830 1240,800 1275,787 1300,830 1335,872 1385,870 1430,890 1520,885 1535,878 1552,876',
  lo1: '112,1413 140,1385 150,1365 165,1350 178,1328 190,1290 205,1240 210,1205 235,1193 290,1195 345,1180 365,1205 395,1227 430,1217 455,1222 475,1270 495,1288 560,1280 600,1283 615,1278 640,1180 665,1090 690,995 720,975 735,975 750,1045 770,1085 830,1125 850,1152 880,1130 940,1118 965,1112 998,1127 1040,1085 1085,1097 1115,1030 1140,1005 1165,965 1195,935 1220,870 1240,820 1285,805 1300,875 1335,910 1385,905 1430,935 1480,930 1535,918 1552,918',
  green: '112,1165 140,1130 165,1103 195,1085 235,1082 260,1090 345,1085 380,1102 430,1103 455,1080 475,1050 530,1005 575,965 610,917 650,903 690,882 735,880 755,910 780,927 830,935 850,948 880,942 930,920 985,905 1040,855 1080,810 1120,765 1160,743 1190,738 1230,723 1285,735 1300,753 1340,765 1390,747 1410,715 1435,700 1520,705 1552,700',
  orange: '112,1242 150,1215 190,1187 230,1170 285,1165 345,1150 430,1143 455,1130 490,1102 540,1070 575,1045 610,1020 650,1005 690,977 720,972 755,980 850,980 890,972 940,957 985,945 1040,915 1080,892 1130,855 1160,838 1190,833 1230,812 1280,803 1340,808 1390,793 1430,767 1500,757 1552,747',
  purple: '112,1042 135,1033 165,1000 205,982 245,1000 280,1060 310,1105 350,1105 380,1143 410,1145 440,1115 475,1020 510,945 540,875 580,810 625,757 650,785 675,807 705,800 730,825 755,905 780,980 800,1005 830,1018 870,1035 900,1000 930,915 960,855 985,850 1020,790 1070,740 1120,660 1155,607 1170,603 1190,620 1210,655 1235,660 1265,705 1300,750 1330,805 1350,835 1380,785 1400,765 1430,685 1450,635 1480,622 1510,632 1552,662',
  blue: '112,1040 140,1030 165,1002 190,982 210,985 235,1010 260,1065 285,1110 320,1118 350,1110 380,1137 410,1130 440,1090 475,990 500,915 525,865 545,815 580,803 612,770 635,805 655,817 680,802 705,810 735,865 755,950 785,1023 820,1010 850,1045 880,990 905,930 930,855 980,852 1015,780 1055,735 1100,660 1130,607 1145,603 1165,625 1185,660 1210,672 1230,672 1260,720 1290,750 1310,815 1340,833 1360,792 1390,760 1420,640 1435,607 1460,607 1490,620 1520,675 1552,713',
  candles: '1030,1078,1040,1050,r 1020,1078,1030,1052,r 965,1052,985,1050,g 965,1012,985,995,g 945,990,970,985,g 970,1000,978,985,r 965,1020,972,982,g 970,1050,972,1038,r 1015,1060,1025,1050,r 1010,1090,1035,1060,r 1055,1133,1055,1133,r 1075,1148,1095,1105,g 1080,1120,1092,1105,r 1090,1160,1095,1110,g 1055,1105,1065,1090,g 1040,1080,1060,1070,g 1010,1075,1055,1062,g 1050,1085,1055,1075,r 1052,1145,1055,1115,r 1100,1200,1120,1175,r 1120,1178,1160,1175,g 1105,1185,1140,1150,r 1075,1175,1080,1160,g 1065,1125,1068,1100,r 1050,1110,1080,1095,g 960,1090,973,1080,g 890,990,945,975,g 850,970,850,955,g 830,900,862,890,r 875,925,880,900,r 885,940,892,925,r 880,942,905,935,g 795,915,810,912,g 800,890,810,850,r 815,905,850,875,g 820,890,835,860,r 810,860,830,833,g 740,850,740,835,g 728,765,740,752,r 740,875,755,862,r 840,930,862,890,r 848,915,850,890,g 795,850,805,835,g 795,820,800,812,r 800,835,808,820,r 800,890,820,862,r 850,890,862,885,r 860,930,875,915,r 905,1078,915,1065,r 1020,1065,1050,1055,g 1000,1055,1025,1050,g 960,1030,975,1020,g 925,985,932,972,g 930,1005,940,970,r 945,1015,960,970,g 955,1050,958,1040,r 985,1045,1020,1040,g 918,1040,920,1030,g 860,930,888,915,g 875,935,890,915,r 880,940,890,915,g 848,910,850,890,g 808,860,835,848,g 835,905,840,875,r 845,890,855,870,r 845,890,850,862,g 830,905,845,890,g 760,870,770,845,g 685,800,755,770,g 730,795,755,772,r 715,780,735,750,g 700,765,725,740,g 635,735,648,730,g 600,700,645,700,g 590,725,620,712,r 630,690,645,675,g 625,685,645,660,g 600,680,630,640,g 590,685,610,630,g 630,700,632,672,r 660,705,673,685,r 680,820,690,765,r 700,785,712,765,g 655,725,672,705,g 645,680,655,660,g 645,725,660,705,r 690,795,705,765,r 720,770,750,760,g 700,765,740,750,g 705,830,740,800,r 700,915,790,900,r 765,915,790,915,g 755,870,780,815,r 780,905,805,815,g 690,830,700,830,g 630,720,685,700,g 680,765,690,700,g 680,750,690,735,g 485,685,550,672,g 495,575,550,560,r 550,590,553,588,r 595,725,670,690,r 685,735,692,700,r 680,755,700,715,r 690,720,700,710,g 640,725,670,690,g 665,740,690,738,r 650,740,700,738,g 640,700,668,690,g 640,710,690,700,r',
  c: '362,359,294,302,320,364,369,406,433,457,521,524,506,499,457,433,401,426,457,532,496,480,424,418,413,315,297,307,331,364,380,390,367,362,380,375,369,302,305,398,473,452,401,393,416,465,488,506,573,561,511,478,447,452,441,468,465,398,331,349,351,333,331,377,380,393,377,320,287,336,338,351,349,338,364,362,362,367,364,413,424,542,501,431,403,447,514,514,475,473,558,524,486,504,408,369,380,359,287,310,351,403,424,444,447,436,478,449,442,448',
  s: '682,682,664,664,664,692,674,736,744,749,767,767,747,747,697,687,679,679,741,762,749,734,690,710,703,669,666,659,685,700,708,700,674,685,708,690,690,664,677,713,741,718,700,700,713,739,749,757,772,765,744,726,695,716,710,744,726,690,685,690,690,679,674,710,710,722,687,669,669,666,661,661,656,654,710,687,687,682,682,726,736,762,723,697,692,726,747,736,726,734,767,721,726,731,685,682,692,687,664,674,692,734,739,747,734,713,741,703,703,728',
  h: '963,962,951,951,958,961,962,976,987,989,1001,1001,991,984,968,957,949,961,978,978,974,963,956,948,945,925,914,899,912,933,950,958,949,952,963,959,962,948,948,974,991,989,976,969,970,979,987,991,1017,1017,1001,978,953,951,945,959,956,940,927,935,933,927,930,943,953,958,951,940,938,940,940,940,945,948,940,959,956,956,962,974,981,1001,992,973,963,967,987,987,979,984,1001,987,976,970,940,925,927,929,907,912,927,958,976,989,987,979,982,968,961,962',
  macd: '112,877 127,880 138,864 151,858 166,858 178,864 192,869 204,893 232,936 244,968 258,988 284,998 310,974 336,953 350,966 363,992 376,1004 390,1005 402,984 430,969 455,897 469,847 482,837 495,845 521,864 534,849 547,848 561,860 587,861 600,841 614,836 627,873 640,903 653,913 680,910 693,914 719,945 732,970 745,1023 758,1058 772,1064 785,1049 798,1022 811,1015 824,1005 838,1020 851,1018 877,959 904,935 930,903 957,912 969,923 982,915 996,890 1035,862 1061,854 1074,840 1088,854 1101,849 1140,852 1167,895 1180,934 1193,941 1220,923 1233,938 1246,965 1285,986 1299,1033 1312,1030 1338,1031 1351,992 1364,960 1378,948 1391,926 1405,879 1417,859 1430,859 1443,889 1469,940 1483,954 1496,957 1508,972 1522,960 1536,955 1552,964',
  sig: '112,874 151,867 192,867 204,877 232,910 258,955 284,976 298,977 336,965 350,966 376,982 390,990 415,987 430,978 455,942 482,885 495,872 547,855 600,856 614,848 627,855 653,883 680,897 706,912 732,942 758,1000 785,1030 798,1030 824,1022 851,1018 904,964 930,931 943,926 982,920 1009,902 1035,878 1061,860 1088,852 1140,853 1155,862 1193,914 1220,923 1246,938 1285,972 1312,1001 1338,1020 1364,990 1391,955 1417,903 1435,890 1445,892 1483,928 1508,948 1536,955 1552,955',
  wr: '112,1243 125,1237 138,1188 151,1193 166,1194 178,1230 192,1234 204,1268 218,1291 232,1308 244,1340 258,1358 284,1355 297,1320 322,1280 350,1320 363,1371 376,1345 390,1340 415,1283 430,1275 442,1186 455,1168 468,1174 482,1202 495,1235 521,1254 534,1235 547,1234 561,1250 587,1246 600,1205 613,1197 627,1265 640,1327 653,1298 666,1260 680,1254 693,1267 706,1310 732,1356 745,1429 758,1408 772,1360 798,1310 811,1313 824,1308 838,1325 851,1327 864,1270 877,1235 890,1244 904,1235 917,1211 930,1206 943,1243 969,1257 982,1245 996,1205 1008,1190 1022,1210 1035,1212 1048,1220 1061,1220 1074,1212 1088,1234 1140,1240 1154,1269 1167,1279 1180,1358 1193,1330 1206,1287 1220,1265 1233,1310 1246,1372 1259,1372 1272,1340 1285,1341 1299,1393 1312,1370 1325,1342 1338,1362 1351,1275 1364,1248 1378,1261 1391,1250 1405,1168 1417,1180 1430,1220 1443,1268 1456,1287 1483,1296 1496,1283 1508,1315 1536,1298 1552,1308',
  wb: '112,1243 125,1251 138,1210 151,1230 166,1238 178,1268 191,1263 204,1375 218,1372 232,1351 244,1366 258,1355 271,1330 284,1328 297,1262 310,1213 323,1222 350,1325 363,1385 376,1337 390,1322 402,1275 415,1249 430,1244 442,1185 455,1213 495,1262 508,1287 521,1323 534,1222 547,1232 561,1266 587,1256 600,1180 613,1225 627,1295 640,1355 653,1330 666,1285 680,1267 693,1266 719,1336 732,1353 745,1385 758,1350 772,1320 785,1303 798,1254 811,1248 824,1252 838,1325 851,1334 864,1260 877,1202 890,1244 904,1253 917,1237 930,1215 943,1280 957,1277 969,1310 982,1272 996,1205 1008,1213 1022,1250 1035,1245 1048,1245 1061,1220 1074,1207 1088,1253 1101,1245 1128,1245 1140,1223 1154,1343 1167,1350 1180,1390 1193,1320 1206,1274 1220,1247 1246,1323 1259,1348 1272,1318 1285,1315 1299,1393 1312,1340 1325,1305 1338,1332 1351,1230 1364,1220 1378,1250 1391,1252 1405,1198 1430,1272 1443,1315 1456,1334 1469,1340 1483,1325 1496,1293 1508,1341 1522,1256 1536,1244 1552,1275',
  arrows: 'd,600,550,687,#0000ff d,1140,416,550,#0000ff d,1404,334,468,#0000ff u,364,1230,1391,#0000ff u,745,1093,1255,#0000ff u,1298,943,1107,#0000ff',
  times: [[266, '01:48'], [425, '03:00'], [582, '04:12'], [897, '06:36'], [1058, '07:48'], [1214, '09:00'], [1375, '10:12'], [1533, '11:24']], ty: 1460, now: [670, 847, 'Oct, 10 05:30'],
  axT: [], axL: [], badT: [], badL: []
},
d: {
  left: 1321, topY: 76, ox: 1285, sx: 2.497, x0: 99, step: 13.26, x1: 1531, bw: 3, cross: 922, cci: '#9400d3',
  vx: [99, 231, 364, 496, 630, 763, 895, 1027, 1160, 1292, 1424], thick: [[272, 2, '#d8d8d8']],
  hy: [238, 310, 383, 457, 532, 605, 680, 754, 827, 901, 976, 1049, 1124, 1198, 1272], hl: [73, 138, 202],
  div: [268, 577, 774, 1087], base: [424, 772, 955],
  hc: [324, 373, 474, 525, 630, 680, 727, 825, 869, 911, 998, 1040, 1150, 1208, 1321, 1380], dash: [424, 647, 742, 955], zero: 1265,
  red: [396, 453, 694, 1121, 1192, 1334, 1409], titles: [297, 606, 804, 1115], tx: 110, hx: 108,
  up1: '99,1032 115,1050 130,1072 155,1073 170,1050 190,975 215,915 235,862 260,852 285,822 310,810 340,803 360,810 385,830 405,832 430,780 460,730 495,715 510,660 540,615 570,603 605,612 630,645 655,660 700,655 725,620 750,545 790,460 815,432 855,415 880,450 900,488 925,500 950,512 1000,512 1030,525 1055,540 1075,500 1095,460 1125,453 1170,455 1190,463 1205,457 1230,458 1255,455 1275,420 1290,395 1305,395 1320,412 1345,475 1370,535 1395,560 1415,605 1430,650 1450,677 1478,680 1490,710 1505,728',
  up2: '99,1073 130,1110 155,1112 175,1085 205,1000 240,925 270,905 310,865 340,855 360,862 375,875 405,875 430,825 470,770 495,745 515,700 545,665 570,657 605,660 630,680 660,695 690,690 715,680 735,640 765,560 800,515 830,488 855,477 880,500 900,530 925,537 960,545 1000,542 1030,555 1055,568 1075,535 1095,503 1120,495 1140,498 1160,490 1190,495 1255,492 1275,463 1295,450 1320,457 1345,520 1370,580 1390,600 1415,645 1430,675 1450,705 1478,705 1505,747',
  mid1: '99,1240 125,1240 160,1220 190,1180 220,1125 260,1085 290,1045 310,1025 345,1020 385,1030 405,1005 430,960 470,900 500,845 530,825 560,820 585,830 620,860 650,872 690,855 720,800 765,710 800,680 850,673 895,670 925,700 960,715 1000,710 1055,680 1085,625 1105,607 1130,615 1180,625 1225,660 1255,690 1290,740 1320,758 1345,760 1370,780 1400,812 1440,820 1505,810',
  mid2: '99,1260 130,1270 155,1270 180,1258 220,1200 260,1165 300,1115 330,1095 370,1062 405,1025 440,980 480,945 530,890 570,865 610,857 650,850 700,830 740,810 780,790 815,763 850,745 890,715 925,707 960,715 1000,718 1055,695 1085,660 1105,650 1150,652 1190,643 1230,645 1260,658 1290,665 1325,668 1345,690 1370,715 1400,745 1440,765 1480,785 1505,790',
  lo2: '99,1442 120,1433 185,1434 210,1423 232,1402 250,1365 290,1316 320,1297 335,1288 355,1268 370,1230 390,1170 430,1105 455,1100 490,1105 510,1120 550,1100 590,1065 620,1015 650,970 695,962 740,970 770,1000 800,1010 835,1003 855,975 880,895 905,830 950,800 1000,795 1055,793 1080,817 1130,820 1150,805 1170,790 1205,803 1225,790 1240,800 1265,860 1290,920 1325,945 1350,943 1370,932 1410,945 1435,925 1480,922 1505,907',
  lo1: '99,1485 115,1481 125,1471 160,1471 190,1478 220,1466 235,1452 258,1402 275,1390 300,1362 328,1347 350,1325 370,1285 388,1215 405,1180 430,1137 455,1137 490,1150 510,1170 540,1155 580,1145 590,1135 620,1060 650,1005 695,997 740,1010 770,1055 800,1072 835,1065 855,1035 880,950 905,880 930,850 960,827 1055,820 1095,858 1150,860 1170,845 1190,823 1210,838 1230,823 1245,840 1265,900 1290,970 1330,1003 1350,995 1375,975 1410,972 1435,953 1480,948 1505,925',
  green: '99,1238 130,1238 165,1222 190,1195 215,1160 240,1135 270,1110 300,1080 330,1062 370,1058 400,1045 430,1010 470,955 500,915 530,885 570,865 595,868 630,885 660,882 695,868 720,845 750,800 780,760 810,733 850,722 880,700 905,703 930,712 970,718 1000,710 1030,700 1055,685 1080,655 1105,638 1180,638 1200,655 1230,670 1255,687 1275,715 1305,743 1345,760 1380,768 1420,793 1470,797 1505,797',
  orange: '99,1205 150,1205 190,1195 230,1170 290,1140 330,1120 370,1110 405,1093 440,1065 470,1045 500,1015 530,990 570,973 635,970 660,960 700,930 745,895 790,860 815,845 850,833 890,810 925,802 965,797 1000,783 1030,767 1055,757 1095,733 1130,723 1175,710 1205,717 1250,717 1275,727 1305,740 1340,748 1380,752 1430,765 1505,775',
  purple: '99,1227 115,1203 145,1195 175,1165 210,1100 245,1035 285,955 310,910 345,910 370,940 395,983 415,970 450,920 480,845 510,775 535,715 570,705 590,740 620,820 650,885 670,893 700,883 720,860 745,790 770,690 800,580 815,540 830,540 855,562 885,580 905,610 925,690 950,740 970,765 990,765 1030,735 1055,690 1080,615 1105,545 1120,533 1145,543 1175,570 1200,650 1240,690 1270,780 1300,855 1320,880 1350,878 1400,853 1440,860 1480,820 1500,800 1518,810',
  blue: '99,1172 125,1175 150,1158 180,1140 205,1090 235,1020 265,970 285,915 300,908 330,930 355,970 375,1000 395,1000 415,955 445,900 480,850 500,770 520,705 545,705 575,735 605,820 620,880 645,913 665,900 690,880 710,825 740,730 770,600 790,540 815,540 845,590 865,595 895,645 920,720 945,755 965,773 985,750 1010,720 1040,685 1060,625 1085,540 1097,520 1110,525 1145,570 1175,600 1200,665 1225,690 1250,750 1275,840 1300,870 1330,883 1350,860 1375,838 1415,853 1445,825 1480,813 1505,815',
  candles: '1155,1235,1190,1230,r 1215,1290,1220,1283,r 1222,1290,1225,1283,g 1150,1225,1160,1220,g 1122,1200,1158,1195,r 1150,1235,1160,1195,g 1080,1165,1088,1158,g 1030,1130,1038,1088,g 1010,1110,1015,1035,g 950,1035,1010,1025,g 930,1010,965,1010,g 928,1015,965,985,r 965,1035,980,1035,r 985,1060,990,1035,g 910,1005,917,985,g 865,935,915,935,r 935,1000,940,1000,r 985,1060,988,1000,g 930,1000,988,1000,r 990,1075,1000,1072,r 1005,1100,1025,1072,g 970,1045,1000,1025,g 960,1035,965,1005,g 887,980,890,962,g 812,915,840,890,g 840,915,842,888,r 800,900,830,890,g 765,860,830,838,r 790,890,790,838,g 730,840,770,788,r 740,825,755,795,g 678,760,680,755,g 665,755,680,740,r 740,815,742,813,r 770,850,778,815,g 740,810,778,803,r 780,850,805,838,r 840,915,842,912,r 900,978,913,975,r 910,990,915,975,g 870,925,888,918,g 860,950,870,925,g 800,880,803,875,g 775,845,803,820,g 740,820,778,815,r 750,830,755,815,g 680,755,682,750,g 630,705,680,703,r 640,735,642,730,g 580,655,585,650,g 543,612,580,612,r 575,665,592,618,g 545,650,555,600,g 535,620,555,600,r 580,655,613,630,r 605,680,655,680,r 675,752,678,680,g 600,675,605,655,g 590,670,605,660,r 650,730,655,668,g 640,715,655,715,r 700,778,718,778,r 715,790,767,775,r 715,790,718,767,g 690,780,718,770,r 735,825,763,770,r 690,770,693,755,g 630,700,645,695,g 630,705,645,700,r 635,715,645,700,g 580,660,640,655,r 630,690,632,655,g 565,635,570,630,g 500,580,505,570,g 440,525,508,518,r 455,530,525,530,g 525,600,530,592,r 590,670,595,668,r 615,690,620,668,g 600,680,620,668,r 590,680,605,665,g 580,655,607,640,r 640,730,655,728,r 720,795,730,790,r 735,815,742,790,g 675,755,680,740,g 665,770,680,740,r 735,800,740,790,r 780,865,790,862,r 830,918,862,913,r 875,950,877,915,g 800,880,805,877,g 770,845,803,815,g 820,895,828,840,g 750,830,753,828,g 740,810,755,788,r 755,850,788,830,r 770,850,790,820,r 815,900,830,850,r 820,905,830,888,r 845,912,850,890,g 790,860,803,850,g 775,855,802,845,r 790,865,795,850,g 740,820,767,815,g 740,820,767,815,r 800,840,805,815,g',
  c: '395,420,421,387,382,398,336,305,320,328,346,356,382,387,356,349,393,434,403,506,504,461,416,341,323,346,354,346,362,356,367,338,354,400,418,406,452,532,561,517,475,465,418,398,380,372,336,333,346,336,349,369,362,375,400,425,473,416,437,488,496,532,529,478,470,488,431,380,398,377,344,372,338,318,318,349,390,444,452,455,449,452,504,530,509,465,465,488,527,527,511,462,449,465,406,413,431,434,455,462,457,413,424,398,359,372,416',
  s: '710,731,690,664,690,672,648,641,635,648,635,672,697,672,648,669,705,697,708,739,700,685,666,643,635,674,656,666,648,661,646,633,679,713,695,708,723,744,754,710,716,685,656,651,682,656,641,661,646,635,664,656,646,695,713,726,726,669,708,700,728,747,734,692,718,708,669,654,695,669,677,666,646,635,648,661,710,739,703,723,687,710,734,747,713,685,710,726,726,744,752,723,685,703,695,661,697,685,716,700,726,695,677,705,674,664,700',
  h: '948,966,961,948,951,948,935,927,925,932,930,943,957,957,948,952,966,971,974,987,982,966,960,943,930,938,935,943,945,943,943,935,948,968,971,974,984,995,1007,992,981,960,945,933,938,935,922,927,927,920,933,938,940,953,969,981,984,968,974,982,971,979,989,987,971,970,959,935,943,938,938,935,930,922,930,938,958,976,976,981,968,971,982,991,979,963,963,969,981,987,976,955,948,943,927,935,938,948,948,958,955,943,950,940,935,943,948',
  macd: '99,915 112,940 125,940 139,923 152,926 165,918 192,875 205,857 218,853 232,840 245,847 258,860 271,864 285,852 298,854 311,875 338,902 351,930 364,937 378,936 391,926 417,879 430,879 444,868 457,866 470,857 484,858 497,851 510,833 523,841 537,868 563,895 577,920 590,953 603,988 616,994 630,998 643,987 656,960 670,938 683,933 696,919 709,890 723,882 749,843 776,842 789,835 802,854 829,900 842,917 855,910 868,923 882,932 895,955 908,978 921,990 935,987 948,993 962,992 988,955 1001,951 1015,939 1041,930 1054,908 1068,882 1081,870 1094,872 1108,891 1121,921 1134,935 1147,953 1161,948 1174,955 1187,980 1200,1012 1213,1015 1227,1000 1240,1003 1253,1015 1280,1062 1293,1065 1306,1042 1333,1022 1346,993 1372,981 1386,990 1399,988 1412,1000 1425,993 1438,981 1452,981 1478,951 1505,955',
  sig: '99,922 125,931 152,929 165,925 179,915 205,886 232,862 245,857 258,860 298,857 324,867 351,893 364,909 391,920 405,915 430,895 457,880 497,862 510,852 523,849 550,862 577,888 603,935 616,958 630,970 643,973 656,967 683,945 709,917 736,885 763,862 789,849 802,851 829,873 855,895 882,912 908,940 935,968 962,981 975,980 1001,965 1028,948 1054,930 1081,898 1094,890 1108,890 1134,912 1161,927 1187,942 1213,985 1240,997 1253,1003 1280,1032 1293,1041 1320,1040 1346,1018 1372,1000 1399,994 1425,995 1465,985 1491,965 1505,960',
  wr: '99,1214 112,1254 125,1251 139,1215 152,1214 165,1228 179,1163 192,1140 205,1138 218,1142 232,1162 245,1178 258,1210 271,1217 285,1190 298,1184 311,1225 324,1252 338,1225 351,1315 364,1334 378,1307 391,1251 405,1158 417,1135 430,1165 444,1177 457,1168 470,1184 484,1178 497,1195 510,1168 523,1190 537,1226 550,1242 563,1231 577,1273 590,1360 603,1408 616,1375 630,1333 643,1320 656,1266 670,1246 683,1235 696,1219 709,1160 723,1158 736,1167 749,1153 763,1172 776,1197 789,1193 802,1205 829,1249 842,1289 855,1238 868,1260 882,1320 895,1343 908,1396 921,1397 935,1333 948,1325 962,1342 975,1290 988,1228 1001,1234 1015,1221 1028,1192 1041,1212 1054,1155 1068,1131 1081,1140 1094,1168 1108,1213 1121,1272 1147,1286 1161,1282 1174,1285 1187,1362 1200,1394 1213,1373 1227,1319 1240,1320 1253,1338 1266,1375 1280,1388 1293,1370 1306,1317 1320,1303 1333,1319 1346,1262 1359,1262 1372,1277 1386,1281 1399,1308 1412,1316 1425,1310 1438,1245 1452,1246 1465,1230 1478,1184 1491,1200 1505,1259',
  wb: '99,1275 112,1358 125,1325 139,1245 152,1217 165,1224 179,1165 192,1168 205,1188 232,1199 245,1202 258,1265 271,1288 285,1150 298,1173 311,1272 324,1313 338,1272 351,1362 364,1331 378,1282 391,1210 405,1163 417,1172 430,1205 444,1212 457,1193 470,1194 484,1177 497,1195 510,1152 523,1202 537,1300 550,1323 563,1287 590,1382 603,1364 616,1325 630,1283 643,1270 656,1140 670,1182 683,1203 696,1205 709,1158 736,1202 749,1176 763,1188 776,1231 789,1202 802,1228 815,1353 829,1356 842,1373 855,1262 868,1264 882,1310 895,1313 908,1368 921,1354 935,1290 948,1277 962,1321 975,1178 988,1156 1001,1203 1015,1211 1028,1188 1041,1228 1054,1157 1068,1157 1081,1178 1094,1214 1108,1275 1121,1357 1147,1310 1174,1277 1187,1408 1200,1370 1213,1331 1227,1271 1240,1269 1253,1311 1266,1383 1280,1357 1293,1330 1306,1272 1320,1233 1333,1262 1346,1180 1359,1208 1372,1267 1386,1298 1399,1330 1412,1342 1425,1322 1438,1228 1452,1216 1478,1175 1491,1200 1505,1291',
  arrows: 'd,1067,360,483,#0000ff u,324,1100,1247,#008000 u,351,1100,1247,#008000 u,603,1000,1147,#ff8000 u,922,878,1025,#ff0000 u,962,866,1013,#0000ff',
  times: [[228, '23:53'], [362, 'Oct, 10'], [493, '04:04'], [628, '05:44'], [759, '07:57'], [1022, '10:10'], [1157, '11:13'], [1289, '12:53'], [1422, '14:20']], ty: 1458, now: [826, 1015, 'Oct, 10 09:40:23'],
  axT: [[310, '102.15'], [385, '102.10'], [457, '102.05'], [532, '102.00'], [607, '101.95'], [680, '101.90'], [976, '101.70'], [1050, '101.65'], [1124, '101.60'], [1198, '101.55'], [1272, '101.50']],
  axL: [[10, '101.45'], [73, '101.40'], [138, '101.35'], [202, '101.30'], [324, '160.0'], [374, '80.0'], [474, '-80.0'], [526, '-160.0'], [631, '90.0'], [678, '60.0'], [727, '30.0'], [825, '0.030'], [869, '0.020'], [912, '0.010'], [998, '-0.010'], [1042, '-0.020'], [1150, '160.0'], [1208, '80.0'], [1324, '-80.0'], [1380, '-160.0']],
  badT: [[743, 765, '101.83', C.r], [765, 782, '101.81', C.o], [782, 798, '101.79', C.g], [833, 847, '', C.r], [888, 910, '101.70', C.r], [708, 745, '101.85', C.b], [798, 833, '101.78', C.k, '#fff'], [908, 945, '101.69', C.b]],
  badL: [[403, 430, '14.2', C.v], [685, 713, '47.1', C.t], [963, 975, '', C.m], [963, 968, '', C.b], [935, 963, '0.001', C.r], [1245, 1274, '9.5', C.r], [1276, 1305, '-35.7', C.b]]
}
};

function draw(svg, k) {
  const X = v => Math.round((k.ox + v / k.sx - k.left) * 10) / 10;
  const T = v => Math.round((v / 3 - k.topY) * 10) / 10;
  const L = v => Math.round((420 + v / 2.583 - k.topY) * 10) / 10;
  const R = Math.round;
  const el = (tag, attrs, text) => {
    const e = document.createElementNS(NS, tag);
    for (const a in attrs) e.setAttribute(a, attrs[a]);
    if (text) e.textContent = text;
    svg.append(e);
    return e;
  };
  const rect = (x, y, w, h, fill) => el('rect', { x, y, width: w, height: h, fill });
  const line = (pts, Y, stroke, w, dash) => el('polyline', {
    points: pts.split(' ').map(p => { const [a, b] = p.split(','); return X(+a) + ',' + Y(+b); }).join(' '),
    fill: 'none', stroke, 'stroke-width': w, 'stroke-linejoin': 'round', ...(dash ? { 'stroke-dasharray': dash } : {})
  });
  const hline = (y, stroke, dash) => el('path', { d: `M${x0} ${R(y) + .5}H${x1}`, stroke, ...(dash ? { 'stroke-dasharray': dash } : {}) });
  const text = (x, y, s, fill = '#111', anchor = 'start') => el('text', { x, y: R(y) + 3, fill, 'text-anchor': anchor }, s);

  const x0 = k.vx[0] > 0 ? R(X(k.vx[0])) : 0, x1 = R(X(k.x1)), bottom = R(L(1437));

  // grid
  k.vx.forEach(v => rect(R(X(v)), 1, 1, bottom - 1, '#d4d4d4'));
  if (k.axT.length) rect(x1, 2, 1, bottom - 2, '#d4d4d4');
  k.thick.forEach(([v, w, c]) => rect(R(X(v) - w / 2), 1, w, bottom - 1, c));
  k.hy.forEach(v => hline(T(v), '#d4d4d4'));
  k.hl.concat(k.hc).forEach(v => hline(L(v), '#d4d4d4'));
  k.dash.forEach(v => hline(L(v), '#666', '5 1 1 1'));
  hline(bottom, '#d4d4d4');
  k.vx.forEach(v => rect(R(X(v)), bottom, 1, 3, '#ddd'));
  ['Commodity Channel Index', 'Relative Strength Index', 'MACD', 'Woodies CCI'].forEach((s, i) => text(X(k.tx), L(k.titles[i]), s, '#555'));
  text(X(k.hx), T(264), '6AZ2', '#555');

  // histograms
  const bars = (data, base, fill) => data.split(',').forEach((v, i) => {
    const a = R(L(Math.min(+v, base))), b = R(L(Math.max(+v, base)));
    rect(R(X(k.x0 + i * k.step) - k.bw / 2), a, k.bw, Math.max(1, b - a), fill);
  });
  bars(k.c, k.base[0], k.cci);
  bars(k.s, k.base[1], C.t);
  bars(k.h, k.base[2], C.r);
  k.red.forEach(v => hline(L(v), '#f01818'));
  hline(L(k.zero), '#2f7fc4', '5 1 1 1');
  line(k.sig, L, '#e0208c', 1);
  line(k.macd, L, '#1010e8', 1);
  line(k.wr, L, '#f01010', 1);
  line(k.wb, L, '#1010f0', 1);

  // price
  k.candles.split(' ').forEach((s, i) => {
    const [hi, lo, a, b, c] = s.split(','), x = R(X(k.x0 + i * k.step));
    rect(x - (k.bw > 3 ? 1 : 0), T(+hi), 1, (lo - hi) / 3, '#000');
    const h = (b - a) / 3, w = k.bw > 3 ? 4 : 3, bx = x - (k.bw > 3 ? 2 : 1);
    rect(bx, R(T(+a)), w, Math.max(1, R(h)), '#000');
    if (h > 2) rect(bx + 1, R(T(+a)) + 1, w - 2, R(h) - 2, c === 'g' ? '#008000' : '#f00');
  });
  line(k.up1, T, C.b, 1, '4 2');
  line(k.lo1, T, C.b, 1, '4 2');
  line(k.mid1, T, C.b, 1, '4 2');
  line(k.up2, T, C.r, 1, '4 2');
  line(k.lo2, T, C.r, 1, '4 2');
  line(k.mid2, T, C.r, 1, '4 2');
  line(k.green, T, C.g, 2);
  line(k.orange, T, C.o, 2);
  line(k.purple, T, C.p, 2);
  line(k.blue, T, C.b, 2);

  // pane splitters
  k.div.forEach(v => {
    const y = R(L(v)) - 1;
    rect(0, y, 1200, 1, '#6c6c6c');
    rect(0, y + 1, 1200, 3, '#eee');
    rect(0, y + 2, 1200, 1, '#c8c8c8');
  });

  // cross-hair and hand-placed markers
  rect(R(X(k.cross)), 1, 1, bottom, '#f00');
  k.arrows.split(' ').forEach(s => {
    const [dir, ax, ay, by, fill] = s.split(','), x = X(+ax), up = dir === 'u';
    const tip = T(+(up ? ay : by)), tail = T(+(up ? by : ay)), d = up ? 1 : -1;
    el('path', { d: `M${x} ${tip}l5 ${6 * d}h-1.500L${x + 4} ${tail}l-4 ${-5 * d}l-4 ${5 * d}L${x - 3.500} ${tip + 6 * d}h-1.500z`, fill, stroke: '#111', 'stroke-width': 1 });
  });

  // axes
  k.axT.forEach(([y, s]) => text(x1 + 3, T(y), s));
  k.axL.forEach(([y, s]) => text(x1 + 3, L(y), s));
  const badge = Y => ([a, b, s, bg, fg]) => {
    const y = R(Y(a)), h = R(Y(b)) - y;
    rect(x1, y, 35, h, bg);
    if (s) text(x1 + 3, y + h / 2, s, fg || '#ccd');
  };
  k.badT.forEach(badge(T));
  k.badL.forEach(badge(L));
  k.times.forEach(([x, s]) => text(X(x), L(k.ty), s, '#111', 'middle'));
  const [na, nb, ns] = k.now;
  rect(R(X(na)), R(L(1442)), R(X(nb) - X(na)), 11, '#f00');
  text(X((na + nb) / 2), L(k.ty), ns, '#fcc', 'middle');
}

const palette = document.getElementById('palette');
document.querySelectorAll('.tools').forEach(t => t.append(palette.content.cloneNode(true)));
document.querySelectorAll('.win').forEach(w => draw(w.querySelector('.plot'), charts[w.dataset.chart]));
```
